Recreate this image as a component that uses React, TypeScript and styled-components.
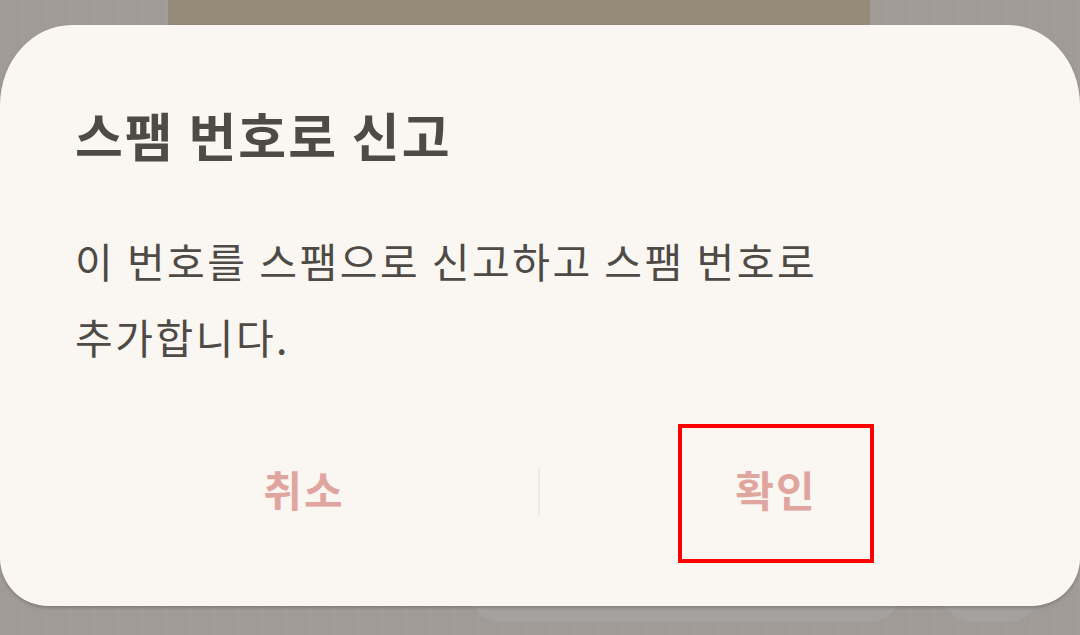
import * as React from 'react'
import styled, { createGlobalStyle } from 'styled-components'

const Global = createGlobalStyle`
  html, body {
    margin: 0;
    padding: 0;
    width: 1080px;
    height: 635px;
    overflow: hidden;
    background: #a29e9a;
    font-family: "Noto Sans CJK KR", "Noto Sans", sans-serif;
  }
`

const Screen = styled.div`
  position: relative;
  width: 1080px;
  height: 635px;
  overflow: hidden;
  background: repeating-linear-gradient(
    90deg,
    #a19b97 0px,
    #a19b97 22px,
    #a39d99 22px,
    #a39d99 24px
  );
`

// 뒤쪽 화면에 깔린 요소들
const TopBand = styled.div`
  position: absolute;
  left: 168px;
  top: 0;
  width: 702px;
  height: 40px;
  background: #968a79;
`

const BackPill = styled.div<{ $left: number; $width: number }>`
  position: absolute;
  left: ${(p) => p.$left}px;
  top: 580px;
  width: ${(p) => p.$width}px;
  height: 42px;
  border-radius: 0 0 30px 30px;
  background: #a3a2a1;
`

const Layer = styled.div`
  position: relative;
  padding-top: 25px;
`

const Dialog = styled.div`
  width: 1080px;
  height: 581px;
  box-sizing: border-box;
  background: #faf6f1;
  border-radius: 72px 72px 48px 48px / 80px 80px 48px 48px;
  box-shadow: 0 2px 3px rgba(80, 70, 60, 0.35);
  padding: 70px 75px 0 75px;
  display: flex;
  flex-direction: column;
`

const Title = styled.h1`
  margin: 0;
  font-size: 52px;
  font-weight: 700;
  color: #4e4a45;
  line-height: 80px;
  letter-spacing: 2px;
`

const Message = styled.p`
  margin: 47px 0 0 0;
  font-size: 41px;
  font-weight: 400;
  color: #4e4a45;
  line-height: 76px;
  letter-spacing: 2.5px;
`

const Actions = styled.div`
  margin-top: 50px;
  display: flex;
  align-items: center;
  justify-content: center;
`

const Action = styled.button<{ $marked?: boolean }>`
  width: 196px;
  height: 139px;
  box-sizing: border-box;
  background: none;
  border: ${(p) => (p.$marked ? '4px solid #ff0000' : '4px solid transparent')};
  font-family: inherit;
  font-size: 42px;
  font-weight: 700;
  color: #e0a59f;
  letter-spacing: 2px;
  padding: 0 0 10px 0;
`

const Divider = styled.div`
  width: 2px;
  height: 48px;
  background: #f1e8de;
  margin: 0 138px 6px 136px;
`

export default function App() {
  return (
    <>
      <Global />
      <Screen>
        <TopBand />
        <BackPill $left={470} $width={430} />
        <BackPill $left={942} $width={96} />
        <Layer>
          <Dialog>
            <Title>스팸 번호로 신고</Title>
            <Message>
              이 번호를 스팸으로 신고하고 스팸 번호로
              <br />
              추가합니다.
            </Message>
            <Actions>
              <Action>취소</Action>
              <Divider />
              <Action $marked>확인</Action>
            </Actions>
          </Dialog>
        </Layer>
      </Screen>
    </>
  )
}
